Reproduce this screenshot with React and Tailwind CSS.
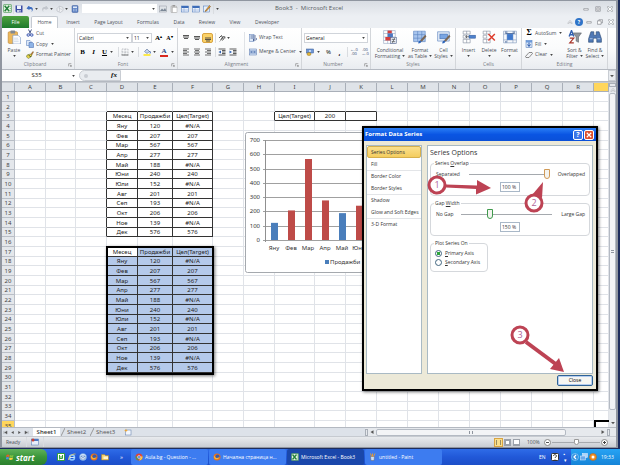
import React from "react";

const months = ["Яну", "Фев", "Мар", "Апр", "Май", "Юни", "Юли", "Авг", "Сеп", "Окт", "Ное", "Дек"];
const sales = [120, 207, 567, 277, 188, 240, 152, 201, 193, 206, 139, 576];
const TARGET = 200;
const columns = [
  ["A", 31], ["B", 30], ["C", 31], ["D", 31], ["E", 35], ["F", 40], ["G", 31], ["H", 31], ["I", 40],
  ["J", 31], ["K", 31], ["L", 31], ["M", 31], ["N", 31], ["O", 31], ["P", 31], ["Q", 31], ["R", 31], ["S", null],
];

function cellValue(row, col) {
  for (const start of [3, 17]) {
    if (row === start) return { D: "Месец", E: "Продажби", F: "Цел(Target)" }[col] ?? (row === 3 ? { I: "Цел(Target)", J: "200" }[col] : "");
    const i = row - start - 1;
    if (i >= 0 && i < 12) {
      if (col === "D") return months[i];
      if (col === "E") return sales[i];
      if (col === "F") return sales[i] > TARGET ? sales[i] : "#N/A";
    }
  }
  return "";
}

function boxed(row, ci) {
  const table = ci >= 3 && ci <= 5 && ((row >= 3 && row <= 15) || (row >= 17 && row <= 29));
  return table || (row === 3 && ci >= 8 && ci <= 10);
}

function Caret({ className = "" }) {
  return (
    <svg viewBox="0 0 4 3" className={"h-[2px] w-[3px] shrink-0 " + className}>
      <path d="M0 0h4L2 3z" fill="#444" />
    </svg>
  );
}

function Sep({ className = "" }) {
  return <span className={"h-2.5 w-px shrink-0 bg-[#d9dce0] " + className} />;
}

const shapes = {
  excel: (<><rect x="1" y="1" width="14" height="14" rx="1" fill="#e7f3e4" stroke="#2f8a3a" /><path d="M3 3l8 10M11 3L3 13" stroke="#23813a" strokeWidth="2.6" /><path d="M12 4h2M12 8h2M12 12h2" stroke="#2f8a3a" /></>),
  save: (<><path d="M1 1h14v14H3l-2-2z" fill="#3c4da3" /><rect x="4" y="1" width="8" height="7" fill="#eef2fb" /><rect x="4" y="10" width="8" height="5" fill="#c7cfe6" /><rect x="9" y="11" width="2" height="3" fill="#3c4da3" /></>),
  undo: <path d="M5 2L1 7l6 3V8c4-1 6 1 4 6 5-5 3-11-4-10V2z" fill="#3d6cc0" />,
  redo: <path d="M11 2l4 5-6 3V8c-4-1-6 1-4 6-5-5-3-11 4-10V2z" fill="#c2c6cd" />,
  shape: (<><path d="M2 7l5-5 7 3v6l-5 4-7-3z" fill="#eceef1" stroke="#a9adb5" /><path d="M5 6l7 3M7 2v11" stroke="#b9bdc5" /></>),
  calc: (<><rect x="2" y="1" width="12" height="14" rx="2" fill="#5f83c4" stroke="#3f5d9a" /><rect x="4" y="3" width="8" height="3" fill="#dfe9f8" /><path d="M4 8.500h8M4 11.500h8" stroke="#c8d8f2" strokeWidth="1.500" strokeDasharray="2 1" /></>),
  picture: (<><rect x="1" y="2" width="14" height="12" fill="#dfe3e8" stroke="#8f959e" /><path d="M2 12l4-5 3 3 3-4 3 6z" fill="#7c8897" /></>),
  clip: (<><rect x="2" y="2" width="11" height="13" rx="1" fill="#d6d6d6" stroke="#9a9a9a" /><rect x="5" y="5" width="9" height="10" fill="#fff" stroke="#aaa" /><rect x="5" y="0" width="5" height="3" fill="#999" /></>),
  sheet: (<><rect x="1" y="2" width="14" height="12" fill="#eaf1fb" stroke="#4673b8" /><rect x="1" y="2" width="14" height="4" fill="#3d6cb8" /><path d="M6 6v8M1 10h14" stroke="#7f9fd0" /></>),
  edit: (<><rect x="1" y="2" width="12" height="12" fill="#e6effa" stroke="#4673b8" /><path d="M5 11L13 1l2 2-8 9-3 1z" fill="#e69b2e" stroke="#754c1b" /></>),
  cut: (<><path d="M5 1l4 8M11 1L7 9" stroke="#4b5b8a" strokeWidth="2" /><circle cx="4.500" cy="12" r="2.500" fill="none" stroke="#3a56b0" strokeWidth="2" /><circle cx="11.500" cy="12" r="2.500" fill="none" stroke="#3a56b0" strokeWidth="2" /></>),
  copy: (<><path d="M1 1h7l2 2v8H1z" fill="#dce8f8" stroke="#4a72b5" /><path d="M6 5h7l2 2v8H6z" fill="#8fb4e6" stroke="#3c62a8" /></>),
  brush: (<><path d="M9 7l5-6 1 1-4 7z" fill="#c88730" stroke="#754c1b" /><path d="M2 8l7-2 3 4-7 5-4-3z" fill="#e8d44a" stroke="#5c6a2a" /><path d="M5 8l5 4" stroke="#44572a" strokeWidth="2" /></>),
  top: <path d="M2 3h12M2 6h12M4 9h8" stroke="#444" strokeWidth="1.800" />,
  mid: <path d="M2 5h12M2 8h12M4 11h8" stroke="#444" strokeWidth="1.800" />,
  bot: <path d="M2 8h12M2 11h12M4 14h8" stroke="#444" strokeWidth="1.800" />,
  left: <path d="M2 2h12M2 5h8M2 8h12M2 11h8M2 14h12" stroke="#444" strokeWidth="1.500" />,
  center: <path d="M2 2h12M4 5h8M2 8h12M4 11h8M2 14h12" stroke="#444" strokeWidth="1.500" />,
  right: <path d="M2 2h12M6 5h8M2 8h12M6 11h8M2 14h12" stroke="#444" strokeWidth="1.500" />,
  orient: (<><path d="M2 8l5-5 2 5-4 3M7 11l4-7M9 13l5-7" stroke="#444" strokeWidth="1.800" fill="none" /><path d="M3 15L14 5M14 9V5h-4" stroke="#777" strokeWidth="1.300" fill="none" /></>),
  indentL: (<><path d="M1 2h14M8 5h7M8 8h7M8 11h7M1 14h14" stroke="#333" strokeWidth="1.600" /><path d="M6 5v6L1 8z" fill="#2f62b5" /></>),
  indentR: (<><path d="M1 2h14M8 5h7M8 8h7M8 11h7M1 14h14" stroke="#333" strokeWidth="1.600" /><path d="M1 5v6l5-3z" fill="#2f62b5" /></>),
  wrap: (<><rect x="1" y="1" width="9" height="14" fill="#dce8f8" stroke="#5b7db5" /><path d="M3 4h11M3 8h10c3 0 3 4 0 4H8M10 10l-2 2 2 2" stroke="#3a5288" strokeWidth="1.500" fill="none" /></>),
  merge: (<><rect x="1" y="2" width="14" height="12" fill="#dce8f8" stroke="#4a6ca8" /><path d="M1 5h14M1 11h14" stroke="#7793c4" /><path d="M2 8h4M14 8h-4M5 6l2 2-2 2M11 6L9 8l2 2" stroke="#27509b" strokeWidth="1.500" fill="none" /></>),
  borders: (<><path d="M2 2h12v12H2zM8 2v12M2 8h12" stroke="#8b8f96" fill="none" strokeDasharray="2 1" /><path d="M1 14h14" stroke="#555" strokeWidth="1.500" /></>),
  bucket: (<><path d="M3 7l5-5 5 5-5 4z" fill="#c4d4ee" stroke="#455a85" /><path d="M13 6c2 2 2 4 1 5" stroke="#2c56a5" strokeWidth="2" fill="none" /><rect x="1" y="12" width="14" height="4" fill="#fce94a" /></>),
  money: (<><rect x="1" y="2" width="14" height="8" fill="#6f97d6" stroke="#33558f" /><circle cx="8" cy="6" r="2" fill="#dceafa" /><ellipse cx="6" cy="12" rx="4" ry="3" fill="#e5b93c" stroke="#94701c" /></>),
  cond: (<><path d="M1 1h20v22H1zM1 6h20M1 12h20M1 18h20M8 1v22M15 1v22" fill="#fff" stroke="#93a4bf" /><rect x="8" y="1" width="7" height="5" fill="#d43f3f" /><rect x="8" y="6" width="9" height="6" fill="#4c78c0" /><rect x="4" y="12" width="11" height="6" fill="#d43f3f" /><rect x="13" y="13" width="10" height="10" fill="#e6ecf5" stroke="#55698f" /><path d="M15 16h6M15 20h6M20 14l-4 8" stroke="#333" /></>),
  fmtTable: (<><path d="M1 2h20v18H1zM1 8h20M1 14h20M8 2v18M15 2v18" fill="#a8c5ee" stroke="#5680bd" /><path d="M12 18l9-10 2 3-8 9z" fill="#7a6756" /><path d="M9 23c0-4 2-6 5-4 1 3-2 4-5 4z" fill="#2d66bb" /></>),
  cellStyle: (<><path d="M1 3h20v16H1z" fill="#e1eaf7" stroke="#5680bd" /><rect x="5" y="7" width="13" height="8" fill="#79a5e3" stroke="#3f6db2" /><path d="M12 18l9-10 2 3-8 9z" fill="#7a6756" /><path d="M9 23c0-4 2-6 5-4 1 3-2 4-5 4z" fill="#2d66bb" /></>),
  insert: (<><path d="M2 2h12v5H2zM8 2v5M2 16h12v6H2zM8 16v6M2 9h6v5H2z" fill="#fff" stroke="#7c8798" /><rect x="12" y="9" width="11" height="5" fill="#4e82cd" stroke="#325c9e" /><path d="M12 11.500H7M9 9l-3 2.500L9 14" stroke="#333" fill="none" /></>),
  del: (<><path d="M2 2h12v5H2zM8 2v5M2 16h12v6H2zM8 16v6M2 9h6v5H2z" fill="#fff" stroke="#7c8798" /><path d="M11 7l11 11M22 7L11 18" stroke="#dd3c2c" strokeWidth="2.500" /></>),
  format: (<><path d="M1 2h22v20H1zM1 7h22M1 17h22M7 2v20M17 2v20" fill="#f5f8fc" stroke="#7b92b7" /><rect x="7" y="7" width="10" height="10" fill="#3f78cb" /><path d="M5 2v4h14V2M5 22v-3" stroke="#5b77a4" strokeWidth="2" fill="none" /></>),
  fillDown: (<><rect x="2" y="1" width="12" height="14" fill="#dce8f8" stroke="#3f6db2" /><rect x="2" y="1" width="12" height="4" fill="#6b9adb" /><path d="M8 5v7M5 9l3 4 3-4" stroke="#2455a8" strokeWidth="2" fill="none" /></>),
  eraser: (<path d="M1 11l7-8h6l1 2-7 8H2z" fill="#f3f4f6" stroke="#555" strokeWidth="1.300" />),
  sort: (<><path d="M2 11L6 1l4 10M4 8h5" stroke="#3260b0" strokeWidth="2.500" fill="none" /><path d="M3 14h7l-7 8h7" stroke="#a8352a" strokeWidth="2" fill="none" /><path d="M9 5h14l-5 7v9l-4-2v-7z" fill="#8f959d" stroke="#5a5f66" /></>),
  find: (<><path d="M5 3h5v6h4V3h5l4 12v6h-8v-7H9v7H1v-6z" fill="#4f78b5" stroke="#27466f" /><path d="M3 15h5M16 15h5" stroke="#a8c3ea" strokeWidth="2" /></>),
  paste: (<><rect x="2" y="3" width="16" height="20" rx="2" fill="#eeb95c" stroke="#b9822e" /><rect x="6" y="1" width="8" height="5" rx="1" fill="#808892" /><path d="M10 9h9l4 4v11H10z" fill="#fff" stroke="#6b8bbd" /><path d="M12 14h7M12 17h8M12 20h8" stroke="#b4c5dd" /></>),
  min: <path d="M2 7h12v4H2z" fill="#fff" stroke="#777b83" strokeWidth="1.500" />,
  restore: <path d="M5 5V2h10v8h-4M1 5h10v9H1z" fill="#fff" stroke="#777b83" strokeWidth="1.700" />,
  max: <path d="M2 2h12v12H2zM5 5h6v6H5z" fill="#fff" stroke="#777b83" strokeWidth="1.600" />,
  close: <path d="M1 2h4l3 3 3-3h4v2l-4 4 4 4v2h-4l-3-3-3 3H1v-2l4-4-4-4z" fill="#fff" stroke="#777b83" strokeWidth="1.400" />,
  up: <path d="M2 11l6-7 6 7-2 2-4-5-4 5z" fill="#fff" stroke="#777b83" />,
  first: <path d="M3 3v10M13 3v10L5 8z" fill="#555" stroke="#555" />,
  prev: <path d="M12 3v10L4 8z" fill="#555" />,
  next: <path d="M4 3v10l8-5z" fill="#555" />,
  last: <path d="M13 3v10M3 3v10l8-5z" fill="#555" stroke="#555" />,
  down: <path d="M3 5h10l-5 6z" fill="#555" />,
  newSheet: (<><rect x="3" y="4" width="11" height="10" fill="#f4f7fc" stroke="#5877a8" /><path d="M4 1l1 3 3 1-3 1-1 3-1-3-3-1 3-1z" fill="#f0a52c" /></>),
  macro: (<><rect x="1" y="2" width="14" height="12" fill="#e8effa" stroke="#4a70b0" /><rect x="1" y="2" width="14" height="4" fill="#4a78c5" /><circle cx="4" cy="4" r="3" fill="#c84032" /></>),
  utorrent: (<><rect width="16" height="16" rx="2" fill="#36a13c" /><rect x="2" y="2" width="12" height="12" fill="#fff" /><path d="M5 4v7h6V4M5 11v2M8 11V6" stroke="#36a13c" strokeWidth="2" fill="none" /></>),
  ie: (<><circle cx="8" cy="9" r="5" fill="none" stroke="#8cc8ff" strokeWidth="3" /><path d="M4 9h9" stroke="#cce6ff" strokeWidth="2" /><path d="M1 14C0 9 8 1 15 2" stroke="#f3cf50" strokeWidth="1.500" fill="none" /></>),
  mail: (<><circle cx="8" cy="8" r="7" fill="#d7e8fb" stroke="#5a97de" /><path d="M4 6h8v6H4zM4 6l4 4 4-4" fill="#fff" stroke="#3b6eb5" /></>),
  firefox: (<><circle cx="8" cy="8" r="7" fill="#e5701d" /><circle cx="9" cy="7" r="4" fill="#3a5aa8" /><path d="M2 5c2 1 2 5 6 5 3 0 4-2 5-2-1 5-9 7-11 1z" fill="#f8b337" /></>),
  folder: (<><path d="M1 3h6l2 2h6v9H1z" fill="#f2cf6b" stroke="#a97d24" /><rect x="5" y="7" width="9" height="5" fill="#fff4cf" /></>),
  chrome: (<><circle cx="8" cy="8" r="7" fill="#e34133" /><path d="M2 5l6 10A7 7 0 0 1 2 5z" fill="#3da454" /><path d="M8 15l6-10c3 5-1 10-6 10z" fill="#f8d044" /><circle cx="8" cy="8" r="3" fill="#4a8ae6" stroke="#fff" /></>),
  paint: (<><path d="M3 7h8l-1 8H4z" fill="#cadff7" stroke="#667" /><path d="M5 7L3 1M7 7V1M9 7l3-6" stroke="#e29a36" strokeWidth="2" /></>),
  help: (<><rect x="1" y="1" width="14" height="14" rx="2" fill="#fff" stroke="#333" strokeWidth="2" /><path d="M5 6c0-4 6-3 6 0 0 2-3 2-3 4M8 12v1" stroke="#333" strokeWidth="2" fill="none" /></>),
  chevron: (<><circle cx="8" cy="8" r="7" fill="#2f8fe0" stroke="#bfe2ff" /><path d="M10 4L6 8l4 4" stroke="#fff" strokeWidth="2.500" fill="none" /></>),
  network: (<><rect x="5" y="1" width="10" height="8" fill="#aed4fa" stroke="#e9f4ff" /><rect x="1" y="6" width="10" height="8" fill="#6aa9ec" stroke="#e9f4ff" /></>),
  avast: (<><circle cx="8" cy="8" r="7" fill="#f09025" stroke="#b95d12" /><circle cx="8" cy="8" r="3" fill="#fff" /></>),
  windows: (<><path d="M1 4c3-2 4-1 6 0L6 8C4 7 3 6 0 8z" fill="#ea5b2c" /><path d="M8 4c2 1 4 1 7 0l-1 4c-3 1-5 1-7 0z" fill="#7fc241" /><path d="M0 9c3-2 4-1 6 0l-1 4c-2-1-4-1-6 0z" fill="#4d8fe4" /><path d="M7 9c2 1 4 1 7 0l-1 4c-3 1-5 1-7 0z" fill="#fbd13c" /></>),
};

function Icon({ name, big = false, className = "size-2" }) {
  return (
    <svg viewBox={big ? "0 0 24 24" : "0 0 16 16"} className={"block shrink-0 " + className} fill="none" aria-hidden="true">
      {shapes[name]}
    </svg>
  );
}

function IconButton({ name, label, className = "w-[11px]", active = false, size = "size-2" }) {
  return (
    <button aria-label={label} className={"flex h-2.5 shrink-0 items-center justify-center " + className + (active ? " rounded-xs border border-[#d9a441] bg-[#fbd268]" : "")}>
      <Icon name={name} className={size} />
    </button>
  );
}

function BigButton({ icon, lines, caret = false, className }) {
  return (
    <button className={"flex shrink-0 flex-col items-center pt-0.5 " + className}>
      <Icon name={icon} big className="size-[14px]" />
      <span className="mt-[3px] leading-[6px]">{lines[0]}</span>
      {caret ? (
        <Caret className="mt-0.5" />
      ) : (
        <span className="flex items-center gap-0.5 leading-[6px] whitespace-nowrap">{lines[1]}<Caret /></span>
      )}
    </button>
  );
}

function LineButton({ icon, label, caret = false }) {
  return (
    <button className="flex h-[11px] items-center gap-0.5 whitespace-nowrap">
      {icon === "sigma" ? <b className="w-2 text-center font-['Liberation_Serif',serif] text-[8px] leading-[8px] text-black">Σ</b> : <Icon name={icon} />}
      <span>{label}</span>
      {caret && <Caret className="ml-px" />}
    </button>
  );
}

function Group({ title, className, launcher = false, children }) {
  return (
    <section className={"flex shrink-0 flex-col border-r border-[#d3d6da] " + className}>
      <div className="flex min-h-0 flex-1">{children}</div>
      <div className="flex h-[9px] items-center justify-center text-[#777c84]">
        <span className="flex-1 text-center">{title}</span>
        {launcher && (
          <button aria-label={title + " settings"} className="mr-0.5">
            <svg viewBox="0 0 6 6" className="size-1"><path d="M1 5V1h4M3 3l2 2M5 3v2H3" stroke="#888" fill="none" /></svg>
          </button>
        )}
      </div>
    </section>
  );
}

function Select({ label, options, className }) {
  return (
    <div className={"relative flex h-2.5 shrink-0 items-center border border-[#d0d4da] bg-white " + className}>
      <select aria-label={label} className="w-full appearance-none bg-transparent pl-px text-[5px] leading-[8px] text-[#222]">
        {options.map((o) => <option key={o}>{o}</option>)}
      </select>
      <Caret className="absolute right-0.5" />
    </div>
  );
}

function TitleBar() {
  return (
    <header className="flex h-[15px] shrink-0 items-center bg-gradient-to-b from-[#d9dde3] to-[#eceff3] px-px">
      <div className="flex flex-1 items-center">
        <Icon name="excel" className="size-[9px]" />
        <Sep className="ml-px" />
        <IconButton name="save" label="Save" className="ml-px w-2" />
        <IconButton name="undo" label="Undo" className="ml-[3px] w-2" /><Caret className="ml-px" />
        <IconButton name="redo" label="Redo" className="ml-[3px] w-2" /><Caret className="ml-px" />
        <IconButton name="shape" label="Shapes" className="ml-[3px] w-2" /><Caret className="ml-px" />
        <IconButton name="calc" label="Calculator" className="ml-[3px] w-2" />
        <div className="relative ml-[3px] flex h-[9px] w-[75px] items-center bg-white">
          <select aria-label="Font" className="size-full appearance-none"><option></option></select>
          <Caret className="absolute right-0.5" />
        </div>
        <IconButton name="picture" label="Picture" />
        <IconButton name="clip" label="Paste" />
        <IconButton name="sheet" label="Sheet" />
        <IconButton name="sheet" label="Table" />
        <IconButton name="edit" label="Edit" />
        <Sep className="ml-px" /><Caret className="ml-0.5" />
      </div>
      <h1 className="text-[6px] text-[#555a62]">Book3&nbsp; -&nbsp; Microsoft Excel</h1>
      <div className="flex flex-1 justify-end gap-px">
        <IconButton name="min" label="Minimize" size="size-1.5" />
        <IconButton name="max" label="Maximize" size="size-1.5" />
        <IconButton name="close" label="Close" size="size-1.5" />
      </div>
    </header>
  );
}

function Tabs() {
  const tabs = [["Insert", "w-7"], ["Page Layout", "w-[43px]"], ["Formulas", "w-9"], ["Data", "w-[26px]"], ["Review", "w-[30px]"], ["View", "w-[26px]"], ["Developer", "w-[38px]"]];
  return (
    <nav className="flex h-3 shrink-0 items-stretch bg-[#eceff3] text-[#4c5159]">
      <button className="w-[27px] rounded-t-xs bg-gradient-to-b from-[#4da13f] to-[#1c7a2c] text-white">File</button>
      <button className="mr-px ml-0.5 w-[27px] rounded-t-xs border border-b-0 border-[#c5cad1] bg-white">Home</button>
      {tabs.map(([t, w]) => <button key={t} className={w}>{t}</button>)}
      <div className="ml-auto flex items-center">
        <IconButton name="up" label="Collapse ribbon" size="size-1.5" />
        <button aria-label="Help" className="size-2 rounded-full bg-[#2f74c8] leading-[8px] font-bold text-white">?</button>
        <IconButton name="min" label="Minimize workbook" size="size-1.5" />
        <IconButton name="restore" label="Restore workbook" size="size-1.5" />
        <IconButton name="close" label="Close workbook" size="size-1.5" />
      </div>
    </nav>
  );
}

function Ribbon() {
  return (
    <div className="flex h-[42px] shrink-0 overflow-hidden border-b border-[#b4b9c1] bg-gradient-to-b from-white via-[#fafbfc] to-[#e9ecf0] text-[#4a4f57]">
      <Group title="Clipboard" className="w-[73px]" launcher>
        <BigButton icon="paste" lines={["Paste"]} caret className="w-6" />
        <div className="flex flex-col">
          <LineButton icon="cut" label="Cut" />
          <LineButton icon="copy" label="Copy" caret />
          <LineButton icon="brush" label="Format Painter" />
        </div>
      </Group>
      <Group title="Font" className="w-[103px]" launcher>
        <div className="flex flex-col gap-1 pt-[5px] pl-0.5 text-black">
          <div className="flex items-center">
            <Select label="Font name" options={["Calibri"]} className="w-[55px]" />
            <Select label="Font size" options={["11"]} className="w-5" />
            <button className="w-[13px] font-['Liberation_Serif',serif] text-[7px] leading-[10px] font-bold">A<sup className="text-[4px]">▴</sup></button>
            <button className="w-[9px] font-['Liberation_Serif',serif] text-[6px] leading-[10px] font-bold">A<sup className="text-[4px]">▾</sup></button>
          </div>
          <div className="flex items-center font-['Liberation_Serif',serif] text-[7px] leading-[10px]">
            <button className="w-[11px] font-bold">B</button>
            <button className="w-[11px] font-bold italic">I</button>
            <button className="w-[11px] font-bold underline">U</button><Caret />
            <Sep className="ml-[5px]" />
            <IconButton name="borders" label="Borders" className="ml-0.5 w-2" /><Caret className="ml-0.5" />
            <Sep className="ml-1" />
            <IconButton name="bucket" label="Fill color" className="ml-1 w-2" /><Caret className="ml-0.5" />
            <button className="ml-1 h-[9px] w-2 border-b-2 border-[#d8281e] leading-[7px] font-bold text-[#26427c]">A</button>
            <Caret className="ml-[3px]" />
          </div>
        </div>
      </Group>
      <Group title="Alignment" className="w-[124px]" launcher>
        <div className="flex flex-col gap-1 pt-[5px] pl-0.5">
          <div className="flex items-center">
            <IconButton name="top" label="Top align" />
            <IconButton name="mid" label="Middle align" />
            <IconButton name="bot" label="Bottom align" active />
            <Sep className="ml-0.5" />
            <IconButton name="orient" label="Orientation" /><Caret />
          </div>
          <div className="flex items-center">
            <IconButton name="left" label="Align left" />
            <IconButton name="center" label="Align center" />
            <IconButton name="right" label="Align right" />
            <Sep className="ml-0.5" />
            <IconButton name="indentL" label="Decrease indent" />
            <IconButton name="indentR" label="Increase indent" />
          </div>
        </div>
        <div className="mt-1 ml-1.5 flex flex-col gap-[3px] border-l border-[#e0e3e7] pl-1">
          <LineButton icon="wrap" label="Wrap Text" />
          <LineButton icon="merge" label="Merge & Center" caret />
        </div>
      </Group>
      <Group title="Number" className="w-[69px]" launcher>
        <div className="flex flex-col gap-1 pt-[5px] pl-0.5 text-black">
          <Select label="Number format" options={["General"]} className="w-16" />
          <div className="flex items-center">
            <IconButton name="money" label="Currency" /><Caret className="ml-0.5" />
            <button className="ml-[3px] w-[11px] text-[6px]">%</button>
            <button className="w-[11px] text-[7px] font-bold">,</button>
            <Sep className="ml-0.5" />
            <button aria-label="Increase decimal" className="w-3 text-[4px] leading-[4px] text-[#31456f]">←.0<br />.00</button>
            <button aria-label="Decrease decimal" className="w-2.5 text-[4px] leading-[4px] text-[#31456f]">.00<br />→.0</button>
          </div>
        </div>
      </Group>
      <Group title="Styles" className="w-[85px]">
        <BigButton icon="cond" lines={["Conditional", "Formatting"]} className="ml-px w-9" />
        <BigButton icon="fmtTable" lines={["Format", "as Table"]} className="w-6" />
        <BigButton icon="cellStyle" lines={["Cell", "Styles"]} className="w-[23px]" />
      </Group>
      <Group title="Cells" className="w-[66px]">
        <BigButton icon="insert" lines={["Insert"]} caret className="ml-0.5 w-[21px]" />
        <BigButton icon="del" lines={["Delete"]} caret className="w-5" />
        <BigButton icon="format" lines={["Format"]} caret className="w-[21px]" />
      </Group>
      <Group title="Editing" className="w-[86px]">
        <div className="ml-[3px] flex w-[39px] flex-col">
          <LineButton icon="sigma" label="AutoSum" caret />
          <LineButton icon="fillDown" label="Fill" caret />
          <LineButton icon="eraser" label="Clear" caret />
        </div>
        <BigButton icon="sort" lines={["Sort &", "Filter"]} className="w-[21px]" />
        <BigButton icon="find" lines={["Find &", "Select"]} className="w-5" />
      </Group>
    </div>
  );
}

function FormulaBar() {
  return (
    <div className="flex h-3 shrink-0 border-b border-[#b4b9c1] bg-white">
      <div className="relative flex w-[77px] items-center">
        <input aria-label="Name box" defaultValue="S35" className="w-full pr-2 text-center text-[6px] text-[#222]" />
        <Caret className="absolute right-1" />
      </div>
      <div className="flex w-[42px] items-center rounded-l-full border border-[#c9cdd3] bg-[#e9ecf0] pl-1">
        <span className="size-1 rounded-full bg-[#c9cdd3]" />
        <button className="ml-auto w-3 font-['Liberation_Serif',serif] text-[7px] font-bold text-black italic">fx</button>
      </div>
      <input aria-label="Formula" className="min-w-0 flex-1" />
      <button aria-label="Expand formula bar" className="flex w-2 items-center justify-center border border-[#c9cdd3] bg-[#e9ecf0]"><Icon name="down" className="size-1.5" /></button>
    </div>
  );
}

function Sheet() {
  return (
    <table className="w-full table-fixed border-separate border-spacing-0 bg-white font-['Noto_Sans',sans-serif] text-[6px] leading-[8px] text-[#222]">
      <colgroup>
        <col style={{ width: 13 }} />
        {columns.map(([n, w]) => <col key={n} style={w ? { width: w } : undefined} />)}
      </colgroup>
      <thead>
        <tr className="h-[9px] text-[#444]">
          <th className="border-r border-b border-[#a9afb8] bg-[#dfe3e8] p-0" aria-label="Select all" />
          {columns.map(([n]) => (
            <th key={n} scope="col" className={"border-r border-b border-[#a9afb8] p-0 font-normal " + (n === "S" ? "bg-[#ffd65c]" : "bg-[#dfe3e8]")}>{n === "S" ? "" : n}</th>
          ))}
        </tr>
      </thead>
      <tbody>
        {Array.from({ length: 35 }, (_, i) => i + 1).map((r) => (
          <tr key={r} className={r % 3 === 0 ? "h-[9px]" : "h-[10px]"}>
            <th scope="row" className={"border-r border-b border-[#b9bec6] p-0 font-normal text-[#444] " + (r === 35 ? "bg-[#ffd65c]" : "bg-[#e4e7eb]")}>{r}</th>
            {columns.map(([n], ci) => (
              <td
                key={n}
                className={
                  "overflow-hidden border-r border-b p-0 text-center whitespace-nowrap " +
                  (boxed(r, ci) || boxed(r, ci + 1) ? "border-r-[#333] " : "border-r-[#e0e3e8] ") +
                  (boxed(r, ci) || boxed(r + 1, ci) ? "border-b-[#333] " : "border-b-[#e0e3e8] ") +
                  (r >= 17 && r <= 29 && ci >= 3 && ci <= 5 && !(r === 17 && ci === 3) ? "bg-[#b4c9ea]" : "")
                }
              >
                {cellValue(r, n)}
              </td>
            ))}
          </tr>
        ))}
      </tbody>
    </table>
  );
}

function Chart() {
  const y = (v) => 108 - v / 7;
  return (
    <svg width="160" height="141" viewBox="0 0 160 141" className="absolute top-[49px] left-[243px] font-['Noto_Sans',sans-serif] text-[6px]">
      <rect x="0.5" y="0.5" width="159" height="140" rx="2" fill="#fff" stroke="#a5a9ae" />
      {[0, 100, 200, 300, 400, 500, 600, 700].map((v) => (
        <g key={v}>
          <path d={`M18 ${Math.round(y(v)) + 0.5}H160`} stroke="#a0a0a0" />
          <text x="15" y={y(v) + 2} textAnchor="end" fill="#333">{v}</text>
        </g>
      ))}
      <path d="M20.500 8v102" stroke="#909090" />
      {months.slice(0, 8).map((m, i) => (
        <g key={m}>
          <rect x={26 + i * 17} y={y(sales[i])} width="7" height={sales[i] / 7} fill={sales[i] > TARGET ? "#be4b48" : "#4a7ebb"} />
          <text x={29 + i * 17} y="118" textAnchor="middle" fill="#333">{m}</text>
        </g>
      ))}
      <rect x="80" y="128" width="4" height="4" fill="#4a7ebb" />
      <text x="85" y="132" fill="#333">Продажби</text>
    </svg>
  );
}

function Fieldset({ title, className, children }) {
  return (
    <fieldset className={"rounded-sm border border-[#d5d8dc] " + className}>
      <legend className="ml-[3px] px-px leading-[6px]">{title}</legend>
      {children}
    </fieldset>
  );
}

const rangeBase =
  "h-2.5 appearance-none bg-[linear-gradient(#a5a9ae,#a5a9ae)] bg-[length:100%_1px] bg-center bg-no-repeat [&::-webkit-slider-thumb]:h-2.5 [&::-webkit-slider-thumb]:w-1.5 [&::-webkit-slider-thumb]:appearance-none [&::-webkit-slider-thumb]:rounded-b-full [&::-webkit-slider-thumb]:border [&::-webkit-slider-thumb]:bg-[#f4f4f0] ";

function SliderField({ title, label, min, max, value, text, minWidth, rangeClass }) {
  return (
    <Fieldset title={title} className="h-9">
      <div className="flex h-4 items-center pr-1 pl-[5px]">
        <span className={minWidth}>{min}</span>
        <input type="range" aria-label={label} defaultValue={value} className={rangeBase + rangeClass} />
        <span className="ml-auto">{max}</span>
      </div>
      <input aria-label={label + " value"} defaultValue={text} className="mx-auto block h-2.5 w-5 border border-[#a9b8c8] bg-white pl-px leading-[8px]" />
    </Fieldset>
  );
}

function Marker({ n, cx, cy }) {
  return (
    <g>
      <circle cx={cx} cy={cy} r="8" fill="#fff" stroke="#bd4354" strokeWidth="3" />
      <text x={cx} y={cy + 3} textAnchor="middle" fill="#b0649a" className="text-[9px]">{n}</text>
    </g>
  );
}

function Dialog() {
  const nav = ["Fill", "Border Color", "Border Styles", "Shadow", "Glow and Soft Edges", "3-D Format"];
  return (
    <div role="dialog" aria-label="Format Data Series" className="absolute top-[43px] left-[360px] flex h-[265px] w-[236px] flex-col border-2 border-black bg-[#ece9d8] text-[#333] shadow-[1px_1px_3px_#0008]">
      <div className="flex h-[13px] shrink-0 items-center gap-px bg-gradient-to-b from-[#2a7df5] via-[#0a55e3] to-[#0a50d8] pr-0.5 pl-px">
        <h2 className="flex-1 text-[6px] font-bold text-white">Format Data Series</h2>
        <button aria-label="Help" className="size-2.5 rounded-xs border border-white bg-[#3a74e8] text-[7px] leading-[8px] font-bold text-white">?</button>
        <button aria-label="Close window" className="flex size-2.5 items-center justify-center rounded-xs border border-white bg-[#dd4f2c]">
          <svg viewBox="0 0 8 8" className="size-1.5"><path d="M1 1l6 6M7 1L1 7" stroke="#fff" strokeWidth="1.500" /></svg>
        </button>
      </div>
      <div className="flex min-h-0 flex-1 gap-[5px] pt-1 pr-[3px] pl-0.5">
        <div className="flex w-14 flex-col border border-[#a9bac4] bg-white">
          <button className="h-3 rounded-xs border border-[#d6b04c] bg-gradient-to-b from-[#fbe08c] to-[#f4cd5e] pl-[3px] text-left leading-[10px]">Series Options</button>
          {nav.map((t, i) => (
            <button key={t} className={"h-3 border-t pl-1 text-left leading-[11px] whitespace-nowrap " + (i % 2 === 1 ? "border-[#e3e5e8]" : "border-transparent")}>{t}</button>
          ))}
        </div>
        <div className="flex min-w-0 flex-1 flex-col gap-1 border border-[#a9bac4] bg-white px-0.5">
          <h3 className="-mb-1 h-[14px] text-[7px] leading-[14px]">Series Options</h3>
          <SliderField label="Series Overlap" title={<>Series <u>O</u>verlap</>} min={<><u>S</u>eparated</>} max="Overlapped" value={100} text="100 %" minWidth="w-[33px]" rangeClass="w-[81px] [&::-webkit-slider-thumb]:border-[#d19a56]" />
          <SliderField label="Gap Width" title={<>Gap <u>W</u>idth</>} min="No Gap" max="Large Gap" value={31} text="150 %" minWidth="w-[25px]" rangeClass="w-[91px] [&::-webkit-slider-thumb]:border-[#3f9a4c]" />
          <Fieldset title="Plot Series On" className="h-8 w-[58px]">
            <div className="flex flex-col pt-[3px] pl-1">
              <label className="flex h-[9px] items-center gap-[3px]"><input type="radio" name="axis" defaultChecked className="size-[7px] appearance-none rounded-full border border-[#40657f] bg-white checked:bg-[radial-gradient(#2da63a_40%,#fff_50%)]" /><span><u>P</u>rimary Axis</span></label>
              <label className="flex h-[9px] items-center gap-[3px]"><input type="radio" name="axis" className="size-[7px] appearance-none rounded-full border border-[#40657f] bg-white" /><span><u>S</u>econdary Axis</span></label>
            </div>
          </Fieldset>
        </div>
      </div>
      <div className="flex h-[15px] shrink-0 justify-end pt-px pr-[3px]">
        <button className="h-[11px] w-9 rounded-xs border border-[#2f6396] bg-[#f6f6f2] leading-[9px] text-black shadow-[inset_0_0_0_1px_#b5cdf0]">Close</button>
      </div>
      <svg viewBox="0 0 232 261" className="pointer-events-none absolute inset-0 size-full">
        <path d="M82 56.500L113 57.500V52L127 60L112 66.500V61L82 59.500z" fill="#bd4354" />
        <path d="M168 67L179 54L178 70z" fill="#bd4354" />
        <path d="M162 214L193 237" stroke="#bd4354" strokeWidth="4" />
        <path d="M195 230L200 244L186 241z" fill="#bd4354" />
        <Marker n="1" cx={73} cy={57} />
        <Marker n="2" cx={170} cy={75} />
        <Marker n="3" cx={156} cy={207} />
      </svg>
    </div>
  );
}

function WorkArea() {
  return (
    <div className="flex min-h-0 flex-1 border-t border-[#c6cad0] bg-[#e3e6ea]">
      <div className="relative min-w-0 flex-1 overflow-hidden">
        <Sheet />
        <div className="absolute top-[163px] left-[104px] h-[129px] w-[108px] border-2 border-black shadow-[1px_1px_3px_#0008]" />
        <div className="absolute top-[337px] left-[592px] h-4 w-8 border-2 border-black" />
        <Chart />
        <Dialog />
      </div>
      <div className="flex w-[7px] shrink-0 flex-col items-center bg-[#e6e9ed]">
        <div className="h-1 w-full border border-[#a9afb8]" />
        <Icon name="up" className="size-1.5" />
        <div className="flex w-full flex-1 items-center justify-center rounded-xs border border-[#b4bac3] bg-[#f3f4f6]">
          <span className="h-[3px] w-[3px] border-y border-[#8f959e]" />
        </div>
        <button aria-label="Scroll down" className="mt-2.5 mb-px"><Icon name="down" className="size-1.5" /></button>
      </div>
    </div>
  );
}

function SheetTabs() {
  return (
    <div className="flex h-[9px] shrink-0 items-stretch border-t border-[#b4b9c1] bg-[#dde2e9] text-[6px] leading-[8px] text-[#555]">
      {["first", "prev", "next", "last"].map((n) => <button key={n} aria-label={n + " sheet"} className="flex w-[7px] items-center justify-center"><Icon name={n} className="size-[5px]" /></button>)}
      <button className="ml-[3px] w-[27px] bg-white font-semibold text-[#333]">Sheet1</button>
      {["Sheet2", "Sheet3"].map((t) => (
        <button key={t} className="flex w-[29px] items-center gap-0.5 pl-px">
          <svg viewBox="0 0 4 8" className="h-2 w-1"><path d="M0 8L4 0" stroke="#999" /></svg>{t}
        </button>
      ))}
      <button aria-label="Insert sheet" className="ml-1 flex w-3 items-center justify-center"><Icon name="newSheet" className="size-2" /></button>
      <div className="ml-auto flex w-[251px] items-center bg-[#e6e9ed]">
        <span className="h-[7px] w-[3px] border border-[#a9afb8]" />
        <button aria-label="Scroll left" className="ml-px w-[7px]"><Icon name="prev" className="size-1.5" /></button>
        <div className="flex h-[7px] w-[190px] items-center justify-center rounded-xs border border-[#b4bac3] bg-[#f3f4f6]"><span className="h-[3px] w-1 border-x border-[#8f959e]" /></div>
        <button aria-label="Scroll right" className="ml-auto w-[7px]"><Icon name="next" className="size-1.5" /></button>
        <span className="mr-1.5 h-[7px] w-[3px] border border-[#a9afb8]" />
      </div>
    </div>
  );
}

function StatusBar() {
  return (
    <footer className="flex h-[11px] shrink-0 items-center border-t border-[#c6cad0] bg-gradient-to-b from-[#e9ebee] to-[#c9cdd3] pr-2 pl-1 text-[#4a4f57]">
      <span className="w-[18px]">Ready</span>
      <Sep className="mr-1 ml-0.5" /><Icon name="macro" className="size-2" /><Sep className="ml-1" />
      <div className="ml-auto flex items-center">
        <button aria-label="Normal view" className="flex size-[9px] items-center justify-center border border-[#d9a441] bg-[#fbe08c]"><span className="size-[5px] border-x border-[#9a8c60]" /></button>
        <button aria-label="Page layout" className="flex size-[9px] items-center justify-center"><span className="size-[7px] border-2 border-[#9ba1aa] bg-white" /></button>
        <button aria-label="Page break" className="flex size-[9px] items-center justify-center"><span className="size-[7px] border border-b-2 border-[#9ba1aa] bg-white" /></button>
        <span className="ml-1.5 w-[17px]">100%</span>
        <button aria-label="Zoom out" className="flex size-[7px] items-center justify-center rounded-full border border-[#888] bg-white"><span className="h-px w-[3px] bg-[#555]" /></button>
        <input type="range" aria-label="Zoom" className="mx-px h-2 w-12 appearance-none bg-[linear-gradient(#a5a9ae,#a5a9ae)] bg-[length:100%_1px] bg-center bg-no-repeat [&::-webkit-slider-thumb]:h-1.5 [&::-webkit-slider-thumb]:w-[5px] [&::-webkit-slider-thumb]:appearance-none [&::-webkit-slider-thumb]:rounded-b-full [&::-webkit-slider-thumb]:border [&::-webkit-slider-thumb]:border-[#999] [&::-webkit-slider-thumb]:bg-white" />
        <button aria-label="Zoom in" className="flex size-[7px] items-center justify-center rounded-full border border-[#888] bg-white"><svg viewBox="0 0 5 5" className="size-[5px]"><path d="M1 2.500h3M2.500 1v3" stroke="#444" /></svg></button>
      </div>
    </footer>
  );
}

function TaskBar() {
  const tasks = [["chrome", "Aula.bg - Question - ..."], ["firefox", "Начална страница н..."], ["excel", "Microsoft Excel - Book3"], ["paint", "untitled - Paint"]];
  return (
    <div className="flex h-4 shrink-0 items-stretch bg-gradient-to-b from-[#2f6ce8] via-[#2158d8] to-[#1c4fc8] text-white">
      <button className="flex w-[47px] items-center gap-0.5 rounded-r-md bg-gradient-to-b from-[#5fb25a] via-[#3a963a] to-[#2c802e] pl-1.5 text-[8px] font-bold italic">
        <Icon name="windows" />start
      </button>
      <div className="flex w-[84px] items-center gap-[3px] pl-2.5">
        {["utorrent", "ie", "mail", "firefox", "folder"].map((n) => <button key={n} aria-label={n}><Icon name={n} /></button>)}
        <span className="ml-2 text-[6px] leading-[8px]">»</span>
      </div>
      {tasks.map(([icon, label]) => (
        <button key={label} className={"mr-px flex w-[77px] items-center gap-0.5 rounded-xs pl-1 whitespace-nowrap " + (icon === "excel" ? "bg-[#1a47ab]" : "bg-[#3d7cf0]")}>
          <Icon name={icon} />{label}
        </button>
      ))}
      <div className="ml-auto flex w-8 items-center gap-[5px]"><span>EN</span><Icon name="help" /><span className="leading-[6px]">▪<br />▾</span></div>
      <div className="flex w-[49px] items-center gap-px bg-gradient-to-b from-[#27a3f4] to-[#1584d8]">
        <Icon name="chevron" /><Icon name="network" /><Icon name="avast" />
        <span className="ml-[3px]">19:33</span>
      </div>
    </div>
  );
}

export default function App() {
  return (
    <main className="flex h-screen flex-col overflow-hidden bg-[#1d2c5c] font-['Open_Sans','Noto_Sans',sans-serif] text-[5px] leading-[7px]">
      <div className="mr-0.5 mb-px flex min-h-0 flex-1 flex-col border-x-2 border-t border-b border-[#9096a0] bg-[#dfe3e8]">
        <TitleBar />
        <Tabs />
        <Ribbon />
        <FormulaBar />
        <WorkArea />
        <SheetTabs />
        <StatusBar />
      </div>
      <TaskBar />
    </main>
  );
}
